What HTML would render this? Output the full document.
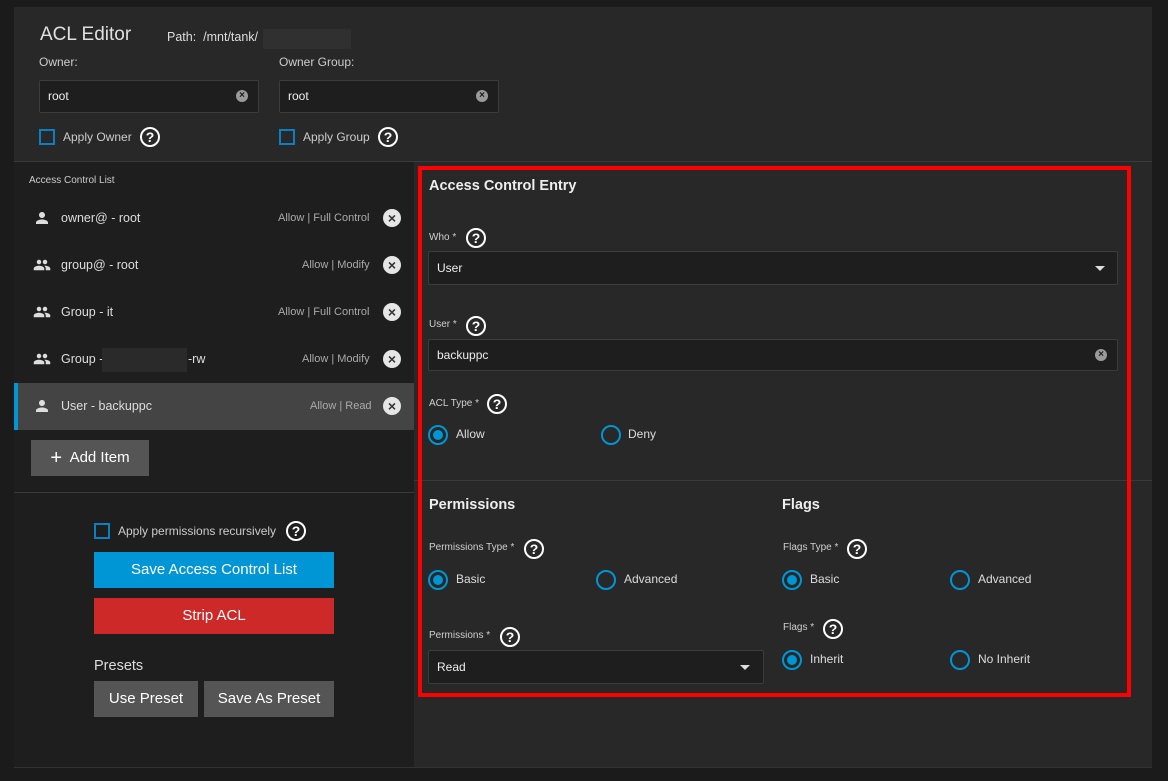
<!DOCTYPE html>
<html><head><meta charset="utf-8"><style>
*{box-sizing:border-box;margin:0;padding:0}
body{width:1168px;height:781px;background:#1b1b1b;font-family:"Liberation Sans",sans-serif;color:#e0e0e0;position:relative;overflow:hidden}
.a{position:absolute;white-space:nowrap}
.help{position:absolute;width:20px;height:20px;border:2px solid #fff;border-radius:50%;color:#fff;font-weight:bold;font-size:14px;line-height:16px;text-align:center}
.cb{position:absolute;width:16px;height:16px;border:2px solid #0b7fc0}
.inp{position:absolute;background:#1e1e1e;border:1px solid #3c3c3c;border-radius:2px}
.clr{position:absolute;width:12px;height:12px;border-radius:50%;background:#9a9a9a;color:#1e1e1e;font-size:10px;line-height:12px;text-align:center;font-weight:bold}
.x{position:absolute;width:18px;height:18px;border-radius:50%;background:#e6e6e6;color:#333;font-size:14px;line-height:18px;text-align:center;font-weight:bold}
.rad{position:absolute;width:20px;height:20px;border:2px solid #0095d5;border-radius:50%}
.rad.on::after{content:"";position:absolute;left:3px;top:3px;width:10px;height:10px;border-radius:50%;background:#0095d5}
.lbl{position:absolute;font-size:10px;color:#cfcfcf}
.btn{position:absolute;color:#fff;font-size:15px;text-align:center;font-weight:normal}
.caret{position:absolute;width:0;height:0;border-left:5px solid transparent;border-right:5px solid transparent;border-top:5px solid #ddd}
.h{font-weight:bold;color:#eee;font-size:14.5px}
</style></head><body>
<div class="a" style="left:14px;top:7px;width:1138px;height:154px;background:#282828"></div>
<div class="a" style="left:14px;top:161px;width:400px;height:606px;background:#1e1e1e"></div>
<div class="a" style="left:414px;top:161px;width:738px;height:606px;background:#282828"></div>
<div class="a" style="left:14px;top:161px;width:1138px;height:1px;background:#3a3a3a"></div>
<div class="a" style="left:14px;top:767px;width:1138px;height:1px;background:#333"></div>

<div class="a" style="left:40px;top:24px;font-size:19px;color:#e0e0e0">ACL Editor</div>
<div class="a" style="left:167px;top:30px;font-size:12.5px;color:#ddd">Path:&nbsp; /mnt/tank/</div>
<div class="a" style="left:263px;top:29px;width:88px;height:20px;background:#303030"></div>
<div class="a" style="left:39px;top:55px;font-size:12px;color:#ccc">Owner:</div>
<div class="a" style="left:279px;top:55px;font-size:12px;color:#ccc">Owner Group:</div>
<div class="inp" style="left:39px;top:80px;width:220px;height:33px"></div>
<div class="a" style="left:48px;top:89px;font-size:12px;color:#eee">root</div>
<div class="clr" style="left:236px;top:90px">×</div>
<div class="inp" style="left:279px;top:80px;width:220px;height:33px"></div>
<div class="a" style="left:288px;top:89px;font-size:12px;color:#eee">root</div>
<div class="clr" style="left:476px;top:90px">×</div>
<div class="cb" style="left:39px;top:129px"></div>
<div class="a" style="left:63px;top:130px;font-size:12px;color:#ccc">Apply Owner</div>
<div class="help" style="left:140px;top:127px">?</div>
<div class="cb" style="left:279px;top:129px"></div>
<div class="a" style="left:303px;top:130px;font-size:12px;color:#ccc">Apply Group</div>
<div class="help" style="left:378px;top:127px">?</div>

<div class="a" style="left:29px;top:175px;font-size:10px;color:#ccc">Access Control List</div>
<svg class="a" style="left:33px;top:209px" width="18" height="18" viewBox="0 0 24 24"><path fill="#ddd" d="M12 12c2.2 0 4-1.8 4-4s-1.8-4-4-4-4 1.8-4 4 1.8 4 4 4zm0 2c-2.7 0-8 1.3-8 4v2h16v-2c0-2.7-5.3-4-8-4z"/></svg>
<div class="a" style="left:61px;top:211px;font-size:12.5px;color:#ddd">owner@ - root</div>
<div class="a" style="left:278px;top:212px;font-size:11px;color:#aaa">Allow | Full Control</div>
<div class="x" style="left:383px;top:209px">×</div>

<svg class="a" style="left:31px;top:256px" width="22" height="18" viewBox="0 0 24 24"><path fill="#ddd" d="M16 11c1.7 0 3-1.3 3-3s-1.3-3-3-3-3 1.3-3 3 1.3 3 3 3zm-8 0c1.7 0 3-1.3 3-3S9.7 5 8 5 5 6.3 5 8s1.3 3 3 3zm0 2c-2.3 0-7 1.2-7 3.5V19h14v-2.5C15 14.2 10.3 13 8 13zm8 0c-.3 0-.6 0-1 .1 1.200.8 2 1.9 2 3.4V19h6v-2.5c0-2.3-4.7-3.5-7-3.5z"/></svg>
<div class="a" style="left:61px;top:258px;font-size:12.5px;color:#ddd">group@ - root</div>
<div class="a" style="left:302px;top:259px;font-size:11px;color:#aaa">Allow | Modify</div>
<div class="x" style="left:383px;top:256px">×</div>

<svg class="a" style="left:31px;top:303px" width="22" height="18" viewBox="0 0 24 24"><path fill="#ddd" d="M16 11c1.7 0 3-1.3 3-3s-1.3-3-3-3-3 1.3-3 3 1.3 3 3 3zm-8 0c1.7 0 3-1.3 3-3S9.7 5 8 5 5 6.3 5 8s1.3 3 3 3zm0 2c-2.3 0-7 1.2-7 3.5V19h14v-2.5C15 14.2 10.3 13 8 13zm8 0c-.3 0-.6 0-1 .1 1.2.8 2 1.9 2 3.4V19h6v-2.5c0-2.3-4.7-3.5-7-3.5z"/></svg>
<div class="a" style="left:61px;top:305px;font-size:12.5px;color:#ddd">Group - it</div>
<div class="a" style="left:278px;top:306px;font-size:11px;color:#aaa">Allow | Full Control</div>
<div class="x" style="left:383px;top:303px">×</div>

<svg class="a" style="left:31px;top:350px" width="22" height="18" viewBox="0 0 24 24"><path fill="#ddd" d="M16 11c1.7 0 3-1.3 3-3s-1.3-3-3-3-3 1.3-3 3 1.3 3 3 3zm-8 0c1.7 0 3-1.3 3-3S9.7 5 8 5 5 6.3 5 8s1.3 3 3 3zm0 2c-2.3 0-7 1.2-7 3.5V19h14v-2.5C15 14.2 10.3 13 8 13zm8 0c-.3 0-.6 0-1 .1 1.2.8 2 1.9 2 3.4V19h6v-2.5c0-2.3-4.7-3.5-7-3.5z"/></svg>
<div class="a" style="left:61px;top:352px;font-size:12.5px;color:#ddd">Group -</div>
<div class="a" style="left:102px;top:348px;width:85px;height:24px;background:#2a2a2a"></div>
<div class="a" style="left:188px;top:352px;font-size:12.5px;color:#ddd">-rw</div>
<div class="a" style="left:302px;top:353px;font-size:11px;color:#aaa">Allow | Modify</div>
<div class="x" style="left:383px;top:350px">×</div>

<div class="a" style="left:14px;top:383px;width:400px;height:47px;background:#444"></div>
<div class="a" style="left:14px;top:383px;width:4px;height:47px;background:#0095d5"></div>
<svg class="a" style="left:33px;top:397px" width="18" height="18" viewBox="0 0 24 24"><path fill="#ddd" d="M12 12c2.2 0 4-1.8 4-4s-1.8-4-4-4-4 1.8-4 4 1.8 4 4 4zm0 2c-2.7 0-8 1.3-8 4v2h16v-2c0-2.7-5.3-4-8-4z"/></svg>
<div class="a" style="left:61px;top:399px;font-size:12.5px;color:#ddd">User - backuppc</div>
<div class="a" style="left:310px;top:400px;font-size:11px;color:#aaa">Allow | Read</div>
<div class="x" style="left:383px;top:397px">×</div>

<div class="btn" style="left:31px;top:440px;width:118px;height:36px;background:#555;line-height:36px"><span style="font-size:20px;vertical-align:-2px">+</span>&nbsp; Add Item</div>
<div class="a" style="left:14px;top:492px;width:400px;height:1px;background:#3a3a3a"></div>

<div class="cb" style="left:94px;top:523px"></div>
<div class="a" style="left:118px;top:524px;font-size:12px;color:#ccc">Apply permissions recursively</div>
<div class="help" style="left:286px;top:521px">?</div>
<div class="btn" style="left:94px;top:552px;width:240px;height:36px;background:#0095d5;line-height:36px">Save Access Control List</div>
<div class="btn" style="left:94px;top:598px;width:240px;height:36px;background:#ce2929;line-height:36px">Strip ACL</div>
<div class="a" style="left:94px;top:658px;font-size:14.5px;color:#ddd">Presets</div>
<div class="btn" style="left:94px;top:681px;width:104px;height:36px;background:#555;line-height:36px">Use Preset</div>
<div class="btn" style="left:204px;top:681px;width:130px;height:36px;background:#555;line-height:36px">Save As Preset</div>

<div class="a" style="left:414px;top:480px;width:738px;height:1px;background:#3a3a3a"></div>
<div class="a h" style="left:429px;top:178px">Access Control Entry</div>

<div class="lbl" style="left:429px;top:232px">Who *</div>
<div class="help" style="left:466px;top:228px">?</div>
<div class="inp" style="left:428px;top:251px;width:690px;height:34px"></div>
<div class="a" style="left:437px;top:261px;font-size:12px;color:#eee">User</div>
<div class="caret" style="left:1095px;top:266px"></div>

<div class="lbl" style="left:429px;top:319px">User *</div>
<div class="help" style="left:466px;top:316px">?</div>
<div class="inp" style="left:428px;top:339px;width:690px;height:32px"></div>
<div class="a" style="left:437px;top:348px;font-size:12px;color:#eee">backuppc</div>
<div class="clr" style="left:1095px;top:349px">×</div>

<div class="lbl" style="left:429px;top:398px">ACL Type *</div>
<div class="help" style="left:487px;top:394px">?</div>
<div class="rad on" style="left:428px;top:425px"></div>
<div class="a" style="left:456px;top:427px;font-size:12px;color:#ddd">Allow</div>
<div class="rad" style="left:601px;top:425px"></div>
<div class="a" style="left:628px;top:427px;font-size:12px;color:#ddd">Deny</div>

<div class="a h" style="left:429px;top:497px">Permissions</div>
<div class="lbl" style="left:429px;top:542px">Permissions Type *</div>
<div class="help" style="left:524px;top:539px">?</div>
<div class="rad on" style="left:428px;top:570px"></div>
<div class="a" style="left:456px;top:572px;font-size:12px;color:#ddd">Basic</div>
<div class="rad" style="left:596px;top:570px"></div>
<div class="a" style="left:624px;top:572px;font-size:12px;color:#ddd">Advanced</div>
<div class="lbl" style="left:429px;top:630px">Permissions *</div>
<div class="help" style="left:500px;top:627px">?</div>
<div class="inp" style="left:428px;top:650px;width:336px;height:34px"></div>
<div class="a" style="left:437px;top:660px;font-size:12px;color:#eee">Read</div>
<div class="caret" style="left:740px;top:665px"></div>

<div class="a h" style="left:782px;top:497px">Flags</div>
<div class="lbl" style="left:783px;top:542px">Flags Type *</div>
<div class="help" style="left:847px;top:539px">?</div>
<div class="rad on" style="left:782px;top:570px"></div>
<div class="a" style="left:810px;top:572px;font-size:12px;color:#ddd">Basic</div>
<div class="rad" style="left:950px;top:570px"></div>
<div class="a" style="left:978px;top:572px;font-size:12px;color:#ddd">Advanced</div>
<div class="lbl" style="left:783px;top:622px">Flags *</div>
<div class="help" style="left:823px;top:619px">?</div>
<div class="rad on" style="left:782px;top:650px"></div>
<div class="a" style="left:810px;top:652px;font-size:12px;color:#ddd">Inherit</div>
<div class="rad" style="left:950px;top:650px"></div>
<div class="a" style="left:978px;top:652px;font-size:12px;color:#ddd">No Inherit</div>

<div class="a" style="left:418px;top:166px;width:713px;height:531px;border:4px solid #ff0000"></div>
</body></html>
